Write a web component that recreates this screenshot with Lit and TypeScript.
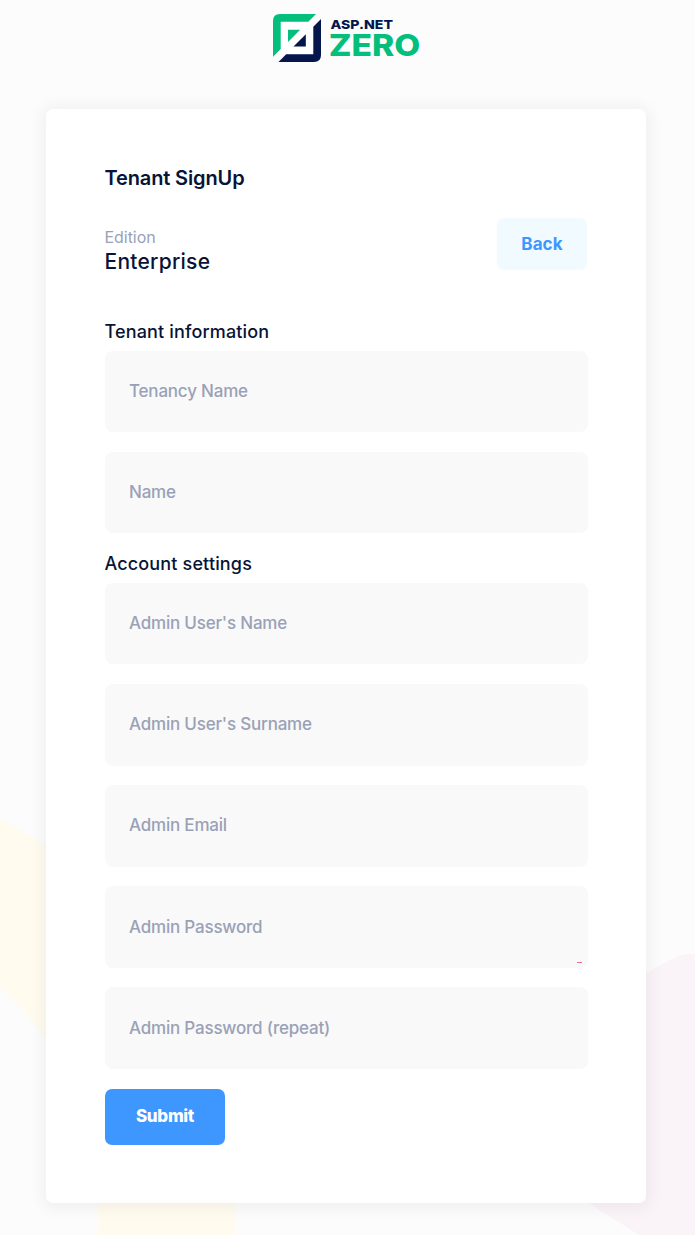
import { LitElement, html, css, svg } from "lit";
import { customElement } from "lit/decorators.js";

@customElement("zero-logo")
class ZeroLogo extends LitElement {
  static styles = css`
    :host { display: block; width: 147px; height: 48px; }
    svg { display: block; overflow: visible; }
    text { font-family: Inter, sans-serif; }
    .small { font-size: 12.2px; font-weight: 800; fill: #05164d; }
    .large { font-size: 30px; font-weight: 800; fill: #04bf7b; }
  `;
  render() {
    return html`<svg width="147" height="48" viewBox="0 0 147 48" aria-label="ASP.NET Zero">
      ${svg`
      <path fill="#fff" d="M7.7 7.7H40.3V40.3H7.7Z" />
      <path fill="#04bf7b" d="M7 0H43L35.3 7.7H7.7V35L0 42.7V7Q0 0 7 0Z" />
      <path fill="#05164d" d="M48 5V41Q48 48 41 48H5.5L13.2 40.3H40.3V12.7Z" />
      <path fill="#04bf7b" d="M15 15.7H27.2L15 28Z" />
      <path fill="#05164d" d="M32.8 20.3V32.6H20.5Z" />
      <text class="small" x="57.5" y="15" textLength="62.5" lengthAdjust="spacingAndGlyphs">ASP.NET</text>
      <text class="large" x="55.7" y="42" textLength="91.5" lengthAdjust="spacingAndGlyphs">ZERO</text>`}
    </svg>`;
  }
}

@customElement("app-root")
class AppRoot extends LitElement {
  static styles = css`
    :host {
      display: flex; flex-direction: column; align-items: center; position: relative;
      box-sizing: border-box; width: 695px; height: 1235px; padding: 14px 3px 0 0;
      overflow: hidden; background: #fcfcfc; font-family: Inter, sans-serif; color: #071437;
    }
    .backdrop { position: absolute; left: 0; top: 0; }
    zero-logo { position: relative; }
    .card {
      position: relative; box-sizing: border-box; width: 600px; height: 1094px; margin-top: 47px;
      padding: 58px 58px 0 59px; border-radius: 7px; background: #fff;
      box-shadow: 0 1.6px 16px 4px rgba(0, 0, 0, 0.05);
    }
    h3, h4 { margin: 0 0 0 -0.5px; }
    h3 { font-size: 20px; line-height: 22px; font-weight: 600; letter-spacing: -0.13px; }
    .edition { display: flex; justify-content: space-between; height: 52px; margin: 29px 1px 0 0; }
    .plan { display: flex; flex-direction: column; padding-top: 8px; margin-left: -0.5px; }
    .label { font-size: 16px; line-height: 22px; color: #99a1b7; letter-spacing: -0.05px; }
    .value { font-size: 21px; line-height: 28px; font-weight: 500; letter-spacing: 0.25px; }
    button { border: 0; border-radius: 7px; font-family: inherit; padding: 0; }
    .back { width: 90px; height: 52px; background: #f1faff; color: #3e97ff; font-size: 17px; font-weight: 700; letter-spacing: 0.1px; }
    .submit {
      width: 120px; height: 56px; padding-bottom: 2px; background: #3e97ff; color: #fff;
      font-size: 17px; font-weight: 800; letter-spacing: -0.3px; display: block;
    }
    h4 { font-size: 18px; line-height: 22px; font-weight: 500; letter-spacing: 0.15px; }
    .tenant { margin-top: 51px; }
    .fields { display: flex; flex-direction: column; gap: 19.5px; padding: 7.6px 0 19.6px; }
    input {
      box-sizing: border-box; width: 100%; height: 81.7px; border: 0; border-radius: 8px; margin: 0;
      padding: 0 24px 1px; background: #f9f9f9; font: 500 17px Inter, sans-serif;
      letter-spacing: -0.2px; display: block;
    }
    input::placeholder { color: #99a1b7; opacity: 1; }
    .field { position: relative; }
    .strength { position: absolute; right: 6px; bottom: 4.7px; width: 5px; height: 1px; background: #f46a8b; }
  `;
  private field(name: string, password = false) {
    return html`<div class="field"><input type="text" placeholder=${name} />${password ? html`<span class="strength"></span>` : ""}</div>`;
  }
  render() {
    return html`
      <svg class="backdrop" width="695" height="1235" viewBox="0 0 695 1235">
        <path fill="#fffbee" d="M0 819L60 853V1055L46 1039Q25 1010 0 987Z" />
        <path fill="#fffbee" d="M97.5 1190H235V1235H97.5Z" />
        <path fill="#faf4f8" d="M695 954H689Q681 954 674 958L570 1014V1191L642 1237H695Z" />
      </svg>
      <zero-logo></zero-logo>
      <main class="card">
        <h3>Tenant SignUp</h3>
        <div class="edition">
          <div class="plan"><span class="label">Edition</span><span class="value">Enterprise</span></div>
          <button class="back">Back</button>
        </div>
        <h4 class="tenant">Tenant information</h4>
        <div class="fields">${["Tenancy Name", "Name"].map((n) => this.field(n))}</div>
        <h4>Account settings</h4>
        <div class="fields">
          ${["Admin User's Name", "Admin User's Surname", "Admin Email", "Admin Password", "Admin Password (repeat)"].map((n) =>
            this.field(n, n === "Admin Password")
          )}
        </div>
        <button class="submit">Submit</button>
      </main>
    `;
  }
}
